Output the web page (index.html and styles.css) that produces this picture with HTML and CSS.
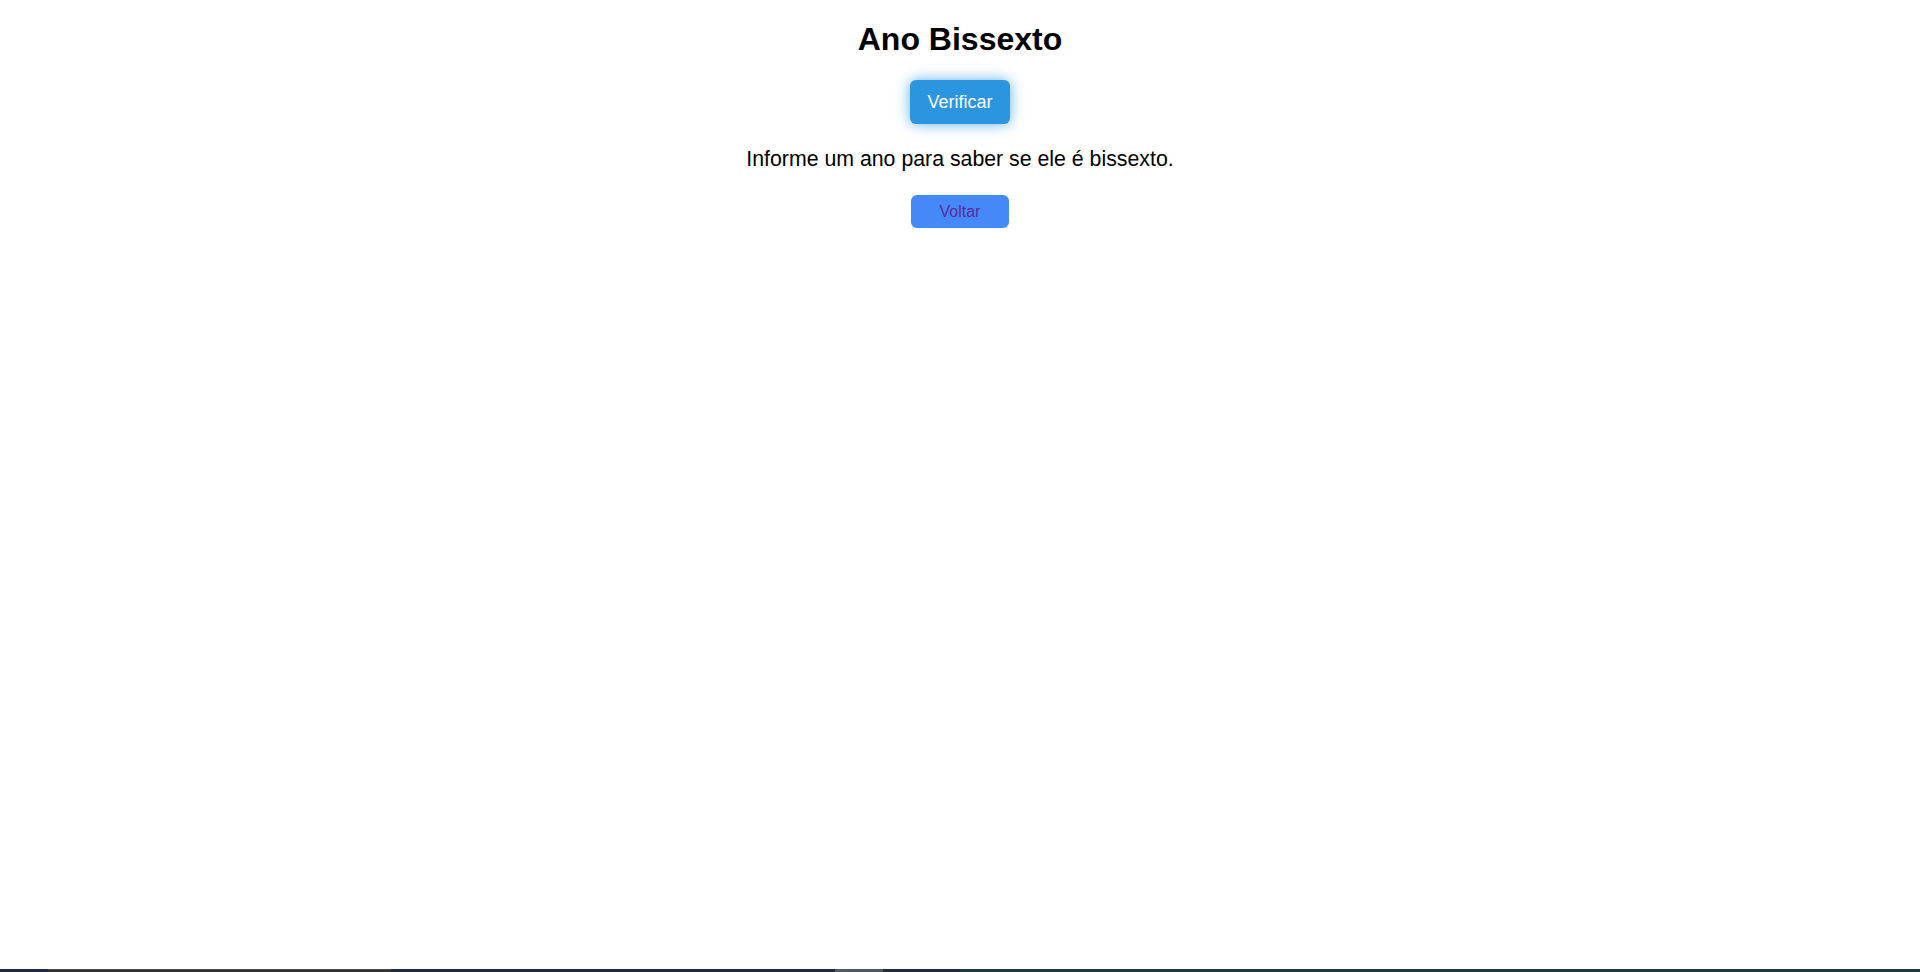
FILE: index.html
```html
<!DOCTYPE html>
<html lang="pt-BR">
<head>
<meta charset="utf-8">
<title>Ano Bissexto</title>
<link rel="stylesheet" href="styles.css">
</head>
<body>
<main class="page">
  <h1 class="title">Ano Bissexto</h1>
  <button class="btn-check" type="button">Verificar</button>
  <p class="message">Informe um ano para saber se ele é bissexto.</p>
  <div class="back-wrap">
    <button class="btn-back" type="button"><span class="back-link">Voltar</span></button>
  </div>
</main>
<div class="taskbar">
  <span class="seg seg-a"></span>
  <span class="seg seg-b"></span>
  <span class="seg seg-c"></span>
  <span class="seg seg-d"></span>
  <span class="seg seg-e"></span>
  <span class="seg seg-f"></span>
</div>
</body>
</html>
```

FILE: styles.css
```css
html, body {
  margin: 0;
  padding: 0;
  background: #ffffff;
}

body {
  font-family: "Liberation Sans", Arial, sans-serif;
  color: #000;
}

.page {
  text-align: center;
}

.title {
  font-size: 32px;
  font-weight: bold;
  margin: 21px 0 22px;
  line-height: 37px;
}

.btn-check {
  font-family: "Liberation Sans", Arial, sans-serif;
  font-size: 18px;
  line-height: 22px;
  height: 44px;
  width: 100px;
  padding: 0;
  border: none;
  border-radius: 6px;
  background: #2b95df;
  color: #ffffff;
  box-shadow: 0 0 14px rgba(43, 150, 224, 0.75);
  cursor: pointer;
}

.message {
  font-size: 21.3px;
  line-height: 25px;
  margin: 23px 0 0;
}

.back-wrap {
  margin-top: 23px;
}

.btn-back {
  font-family: "Liberation Sans", Arial, sans-serif;
  font-size: 16px;
  line-height: 18px;
  width: 98px;
  height: 33px;
  padding: 0;
  border: none;
  border-radius: 6px;
  background: #4589f8;
  cursor: pointer;
}

.back-link {
  color: #5b2a98;
}

.taskbar {
  position: fixed;
  left: 0;
  right: 0;
  bottom: 0;
  height: 3px;
  display: flex;
}

.seg {
  display: block;
  height: 3px;
}

.seg-a { width: 48px; background: #1e2e3e; }
.seg-b { width: 343px; background: #333333; border-top: 1px solid #4a4a4a; height: 2px; }
.seg-c { width: 444px; background: #1e2e3e; }
.seg-d { width: 48px; background: #4b5c66; }
.seg-e { width: 77px; background: #1e2e3e; }
.seg-f { flex: 1; background: #223a42; }
```
